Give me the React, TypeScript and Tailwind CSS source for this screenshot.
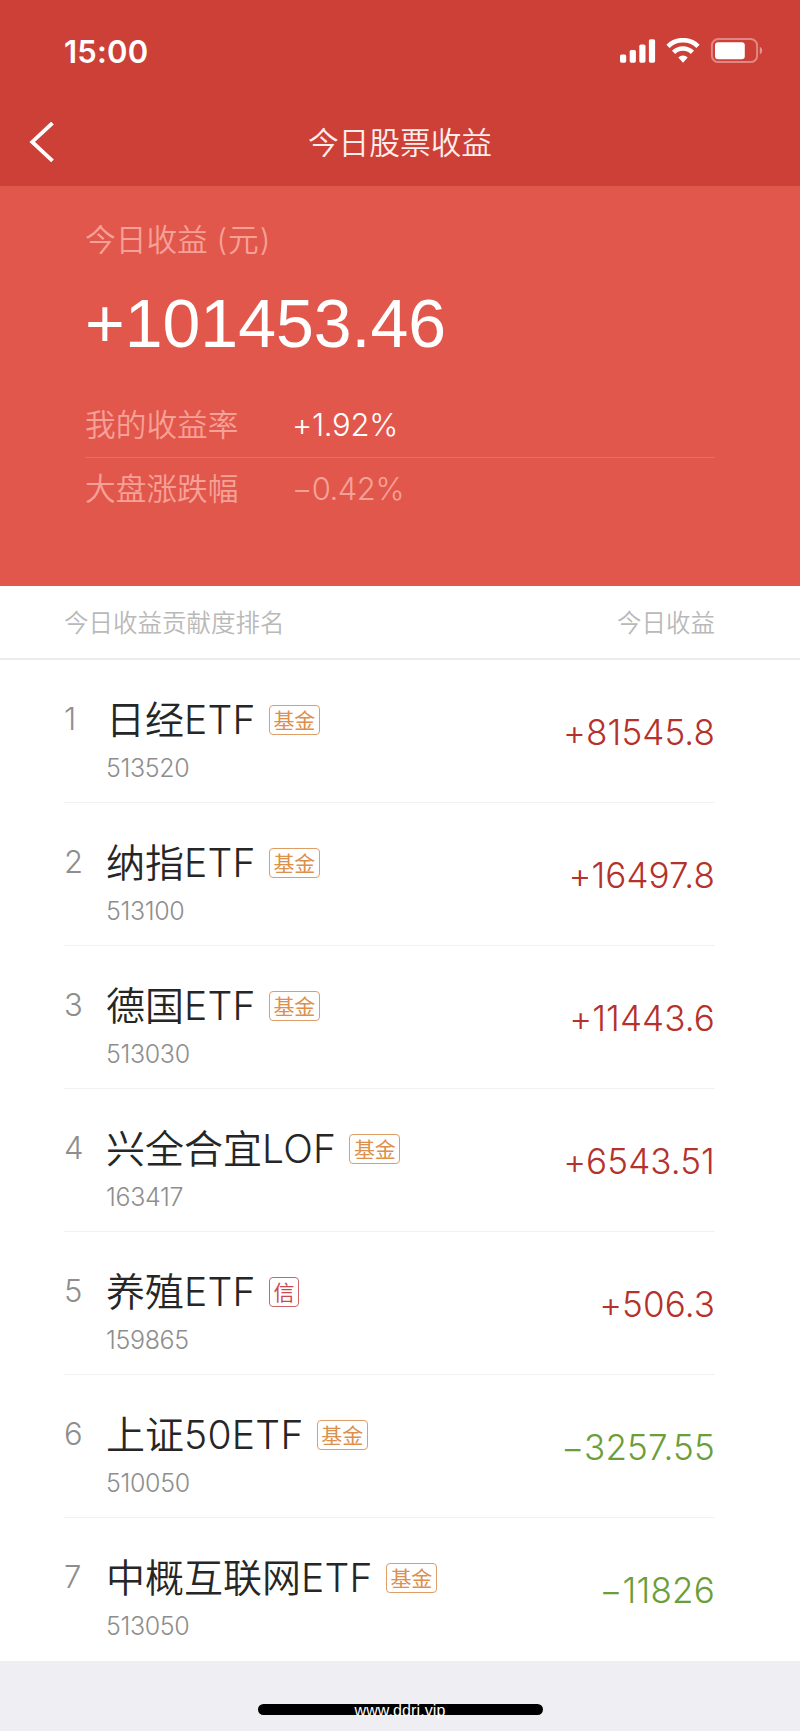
type Tag = 'fund' | 'credit';

interface Holding {
  hanzi: string;
  latin: string;
  code: string;
  tag: Tag;
  profit: string;
}

const holdings: Holding[] = [
  { hanzi: '日经', latin: 'ETF', code: '513520', tag: 'fund', profit: '+81545.8' },
  { hanzi: '纳指', latin: 'ETF', code: '513100', tag: 'fund', profit: '+16497.8' },
  { hanzi: '德国', latin: 'ETF', code: '513030', tag: 'fund', profit: '+11443.6' },
  { hanzi: '兴全合宜', latin: 'LOF', code: '163417', tag: 'fund', profit: '+6543.51' },
  { hanzi: '养殖', latin: 'ETF', code: '159865', tag: 'credit', profit: '+506.3' },
  { hanzi: '上证', latin: '50ETF', code: '510050', tag: 'fund', profit: '−3257.55' },
  { hanzi: '中概互联网', latin: 'ETF', code: '513050', tag: 'fund', profit: '−11826' },
];

function StatusBar() {
  return (
    <div className="flex h-[100px] items-center justify-between pl-16 pr-[37px]">
      <span className="mt-[2px] text-[31px] font-semibold leading-none tracking-[0.2px]">15:00</span>
      <svg className="mt-[1px]" width="143" height="26" viewBox="0 0 143 26" fill="currentColor">
        <rect x="0" y="16.5" width="6.2" height="8.2" rx="1.6" />
        <rect x="9.7" y="12" width="6.2" height="12.7" rx="1.6" />
        <rect x="19.3" y="6.6" width="6.2" height="18.1" rx="1.6" />
        <rect x="28.9" y="1.2" width="6.2" height="23.5" rx="1.6" />
        <g fill="none" stroke="currentColor" strokeWidth="4.6">
          <path d="M48 8.3a21.4 21.4 0 0 1 30 0" />
          <path d="M53.6 14.3a13.4 13.4 0 0 1 18.8 0" />
        </g>
        <path d="M58.3 19.4a6.8 6.8 0 0 1 9.4 0L63 24.7z" />
        <rect x="91.9" y="1.1" width="45.2" height="23" rx="6.4" fill="none" stroke="#fff" strokeOpacity="0.38" strokeWidth="2" />
        <rect x="95" y="4.2" width="29.8" height="17" rx="3.2" />
        <path d="M139.8 8.8a4.2 4.2 0 0 1 0 7.6z" fillOpacity="0.45" />
      </svg>
    </div>
  );
}

function TagBadge({ tag }: { tag: Tag }) {
  return tag === 'fund' ? (
    <span className="flex h-[30px] w-[51px] items-center justify-center rounded-[4px] border border-[#df9d68] text-[21px] leading-none text-[#dd8f4c]">
      基金
    </span>
  ) : (
    <span className="flex h-[30px] w-[30px] items-center justify-center rounded-[4px] border border-[#cf6468] text-[21px] leading-none text-[#c9494d]">
      信
    </span>
  );
}

function HoldingRow({ item, rank, last }: { item: Holding; rank: number; last: boolean }) {
  return (
    <li className={last ? 'flex h-[143px]' : 'flex h-[143px] border-b border-[#f1f1f1]'}>
      <span className="mt-[43px] w-[42px] text-[31px] font-light leading-[32px] text-[#8e8e8e]">{rank}</span>
      <div className="flex flex-1 flex-col">
        <div className="mt-[38px] flex h-[44px] items-center">
          <span className="text-[39px] font-[350] leading-[44px] text-[#262626]">{item.hanzi}</span>
          <span className="text-[39px] font-[350] leading-[44px] tracking-[0.3px] text-[#262626]">{item.latin}</span>
          <span className="ml-[13px]">
            <TagBadge tag={item.tag} />
          </span>
        </div>
        <span className="mt-[12px] text-[25px] font-light leading-[28px] tracking-[-0.35px] text-[#8e8e8e]">{item.code}</span>
      </div>
      <span
        className={
          item.profit.startsWith('+')
            ? 'mt-[52px] text-[35px] font-[350] leading-[40px] tracking-[0.1px] text-[#b5312b]'
            : 'mt-[52px] text-[35px] font-[350] leading-[40px] tracking-[0.2px] text-[#6b9e38]'
        }
      >
        {item.profit}
      </span>
    </li>
  );
}

export default function App() {
  return (
    <div className="flex h-[1731px] w-[800px] flex-col overflow-hidden bg-[#efeef3] font-['Inter','Noto_Sans_CJK_SC',sans-serif]">
      <header className="h-[186px] bg-[#cc4037] text-white">
        <StatusBar />
        <div className="grid h-[86px] grid-cols-[100px_1fr_100px] items-center">
          <button className="pl-[29px]" aria-label="返回">
            <svg width="26" height="42" viewBox="0 0 26 42" fill="none" stroke="currentColor" strokeWidth="3.8">
              <path d="M23.5 1 3.2 19.9 23.5 38.8" />
            </svg>
          </button>
          <h1 className="text-center text-[30.7px] font-[350] leading-[40px] text-[#ffeeeb]">今日股票收益</h1>
        </div>
      </header>

      <section className="h-[400px] bg-[#e2574c] px-[85px] pt-[32px] text-[#f6a197]">
        <p className="text-[30.7px] font-[350] leading-[44px]">
          今日收益 <span className="tracking-[1px]">(元)</span>
        </p>
        <p className="mt-[25px] font-['Liberation_Sans',sans-serif] text-[68px] leading-[72px] text-white">+101453.46</p>
        <div className="mt-[34px] flex h-[65px] items-center border-b border-[#e96b62] text-[30.7px] font-[350]">
          <span className="w-[207px]">我的收益率</span>
          <span className="text-[31px] tracking-[-0.3px] text-white">+1.92%</span>
        </div>
        <div className="flex h-[62px] items-center text-[30.7px] font-[350]">
          <span className="w-[207px]">大盘涨跌幅</span>
          <span className="text-[31px] tracking-[-0.5px]">−0.42%</span>
        </div>
      </section>

      <div className="flex h-[74px] items-center justify-between border-b-2 border-[#ececec] bg-white pl-16 pr-[85px] pt-[2px] text-[24.5px] font-[350] text-[#b9b9b9]">
        <span>今日收益贡献度排名</span>
        <span>今日收益</span>
      </div>

      <ul className="bg-white pl-16 pr-[85px]">
        {holdings.map((item, i) => (
          <HoldingRow key={item.code} item={item} rank={i + 1} last={i === holdings.length - 1} />
        ))}
      </ul>

      <footer className="flex justify-center pt-[43px]">
        <div className="flex h-[11px] w-[285px] justify-center rounded-full bg-black">
          <span className="font-['Liberation_Sans',sans-serif] text-[16px] leading-[13px] tracking-[0.1px] text-white">www.ddri.vip</span>
        </div>
      </footer>
    </div>
  );
}
